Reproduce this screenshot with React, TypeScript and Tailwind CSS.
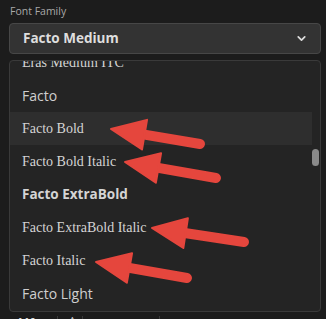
import { ChevronDown } from 'lucide-react';

const fonts = [
  { name: 'Eras Medium ITC', kind: 'serif' },
  { name: 'Facto', kind: 'sans' },
  { name: 'Facto Bold', kind: 'serif', active: true },
  { name: 'Facto Bold Italic', kind: 'serif' },
  { name: 'Facto ExtraBold', kind: 'bold' },
  { name: 'Facto ExtraBold Italic', kind: 'serif' },
  { name: 'Facto Italic', kind: 'serif' },
  { name: 'Facto Light', kind: 'sans' },
];

const arrows = [
  { tip: [111, 129], tail: [200, 144] },
  { tip: [125, 162], tail: [216, 178] },
  { tip: [152, 228], tail: [244, 242] },
  { tip: [96, 262], tail: [187, 278] },
];

function Arrow({ tip, tail }: { tip: number[]; tail: number[] }) {
  const dx = tail[0] - tip[0];
  const dy = tail[1] - tip[1];
  const len = Math.hypot(dx, dy);
  const ux = dx / len;
  const uy = dy / len;
  const headLen = 34;
  const headW = 15;
  const bx = tip[0] + ux * headLen;
  const by = tip[1] + uy * headLen;
  const p1 = [bx - uy * headW, by + ux * headW];
  const p2 = [bx + uy * headW, by - ux * headW];
  return (
    <g fill="#e5463d" stroke="#e5463d">
      <line x1={bx - ux * 6} y1={by - uy * 6} x2={tail[0]} y2={tail[1]} strokeWidth={10} strokeLinecap="round" />
      <polygon points={`${tip[0]},${tip[1]} ${p1[0]},${p1[1]} ${p2[0]},${p2[1]}`} strokeWidth={2} strokeLinejoin="round" />
    </g>
  );
}

export default function App() {
  return (
    <div className="relative w-[326px] h-[319px] overflow-hidden bg-[#1c1c1c] font-['Open_Sans',sans-serif]">
      <div className="pl-[10px] pt-[4px] text-[10.5px] leading-[15px] text-[#a8a8a8]">Font Family</div>

      <div className="ml-[9px] mr-[5px] mt-[4px] h-[31px] flex items-center justify-between rounded-[4px] border border-[#474747] bg-[#333333] pl-[13px] pr-[12px]">
        <span className="text-[13.5px] font-bold text-[#dedede]">Facto Medium</span>
        <ChevronDown size={13} strokeWidth={3.2} className="text-[#dcdcdc]" />
      </div>

      <div className="relative ml-[9px] mr-[5px] mt-[6px] h-[252px] overflow-hidden rounded-[4px] border border-[#3a3a3a] bg-[#242424]">
        <div className="-mt-[15px] mr-[8px]">
          {fonts.map((f) => (
            <div
              key={f.name}
              className={`h-[33px] flex items-center pl-[12px] ${f.active ? 'bg-[#2e2e2e]' : ''}`}
            >
              {f.kind === 'serif' && (
                <span className="font-['Liberation_Serif',serif] text-[14px] text-[#d4d4d4]">{f.name}</span>
              )}
              {f.kind === 'sans' && <span className="text-[14px] text-[#cfcfcf]">{f.name}</span>}
              {f.kind === 'bold' && <span className="text-[13.5px] font-bold text-[#d4d4d4]">{f.name}</span>}
            </div>
          ))}
        </div>
        <div className="absolute right-[1px] top-[88px] h-[17px] w-[7px] rounded-full bg-[#8a8a8a]" />
      </div>

      <div className="flex h-[10px] items-start pt-[4px] text-[#d0d0d0]">
        <span className="ml-[19px] w-[38px] text-[14px] font-bold leading-[14px]">VA</span>
        <span className="h-[10px] border-l border-[#3a3a3a]" />
        <span className="ml-[11px] w-[13px] text-[12px] leading-[12px]">^</span>
        <span className="h-[10px] w-[78px] border-l border-r border-[#3a3a3a]" />
      </div>

      <svg className="absolute left-0 top-0" width={326} height={319}>
        {arrows.map((a, i) => (
          <Arrow key={i} tip={a.tip} tail={a.tail} />
        ))}
      </svg>
    </div>
  );
}
